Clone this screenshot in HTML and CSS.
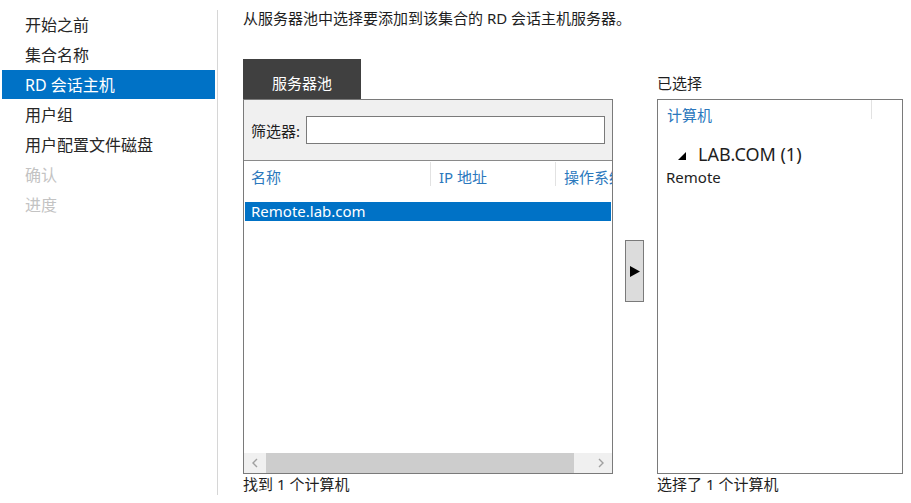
FILE: index.html
```html
<!DOCTYPE html>
<html lang="zh-CN">
<head>
  <meta charset="UTF-8">
  <title>选择服务器</title>
  <link rel="stylesheet" href="styles.css">
</head>
<body>
  <div class="wizard">
    <!-- 左侧步骤 -->
    <ul class="steps">
      <li>开始之前</li>
      <li>集合名称</li>
      <li class="active">RD 会话主机</li>
      <li>用户组</li>
      <li>用户配置文件磁盘</li>
      <li class="disabled">确认</li>
      <li class="disabled">进度</li>
    </ul>

    <!-- 主内容 -->
    <div class="content">
      <p class="intro">从服务器池中选择要添加到该集合的 RD 会话主机服务器。</p>

      <div class="picker">
        <!-- 服务器池 -->
        <div class="pool">
          <div class="tab">服务器池</div>
          <div class="box">
            <div class="filter">
              <label>筛选器:</label>
              <input type="text" class="filter-input">
            </div>
            <div class="list-head">
              <span class="col col-name">名称</span>
              <span class="col col-ip">IP 地址</span>
              <span class="col col-os">操作系统</span>
            </div>
            <div class="list-body">
              <div class="row selected">Remote.lab.com</div>
            </div>
            <div class="hscroll">
              <svg class="arrow" width="8" height="10" viewBox="0 0 8 10"><path d="M6 1 L2 5 L6 9" fill="none" stroke="#a0a0a0" stroke-width="1.4"/></svg>
              <div class="thumb"></div>
              <svg class="arrow" width="8" height="10" viewBox="0 0 8 10"><path d="M2 1 L6 5 L2 9" fill="none" stroke="#a0a0a0" stroke-width="1.4"/></svg>
            </div>
          </div>
          <div class="count">找到 1 个计算机</div>
        </div>

        <!-- 添加按钮 -->
        <div class="mover">
          <div class="add-btn">
            <svg width="10" height="11" viewBox="0 0 10 11"><path d="M0 0 L10 5.5 L0 11 Z" fill="#000"/></svg>
          </div>
        </div>

        <!-- 已选择 -->
        <div class="chosen">
          <div class="chosen-label">已选择</div>
          <div class="box">
            <div class="chosen-head">
              <span class="col-comp">计算机</span>
            </div>
            <div class="tree">
              <div class="group">
                <svg width="8" height="8" viewBox="0 0 8 8"><path d="M8 0 L8 8 L0 8 Z" fill="#000"/></svg>
                <span>LAB.COM (1)</span>
              </div>
              <div class="leaf">Remote</div>
            </div>
          </div>
          <div class="count">选择了 1 个计算机</div>
        </div>
      </div>
    </div>
  </div>
</body>
</html>
```

FILE: styles.css
```css
/* ====== RESET ====== */
* {
  margin: 0;
  padding: 0;
  box-sizing: border-box;
}
ul {
  list-style: none;
}

body {
  font-family: "Noto Sans", "Noto Sans CJK SC", sans-serif;
  font-size: 15px;
  color: #1e1e1e;
  background-color: #fff;
}

.wizard {
  display: flex;
  height: 503px;
}

/* ====== STEPS ====== */
.steps {
  width: 218px;
  margin-top: 10px;
  padding: 0 2px 0 2px;
  border-right: 1px solid #d6d6d6;
  height: 485px;
}
.steps li {
  height: 30px;
  line-height: 30px;
  padding-left: 23px;
  font-size: 16px;
  color: #262626;
}
.steps li.active {
  background-color: #0072c6;
  color: #fff;
  height: 29px;
  margin-bottom: 1px;
}
.steps li.disabled {
  color: #c3c3c3;
}

/* ====== CONTENT ====== */
.content {
  padding-left: 25px;
  padding-top: 8px;
}
.intro {
  line-height: 20px;
  height: 20px;
}

.picker {
  display: flex;
  margin-top: 31px;
}

.box {
  border: 1px solid #7a7a7a;
  height: 375px;
  background-color: #fff;
}

/* ====== POOL ====== */
.pool {
  width: 370px;
}
.tab {
  width: 118px;
  height: 40px;
  background-color: #404040;
  color: #fff;
  text-align: center;
  line-height: 22px;
  padding-top: 13px;
}
.pool .box {
  display: flex;
  flex-direction: column;
}
.filter {
  background-color: #f0f0f0;
  height: 61px;
  border-bottom: 1px solid #8a8a8a;
  display: flex;
  align-items: center;
  padding-left: 7px;
  padding-right: 7px;
}
.filter label {
  width: 55px;
}
.filter-input {
  width: 299px;
  height: 28px;
  border: 1px solid #7a7a7a;
  background-color: #fff;
}
.list-head {
  display: flex;
  height: 24px;
  margin-top: 1px;
}
.col {
  color: #2b78bd;
  line-height: 30px;
  white-space: nowrap;
  overflow: hidden;
}
.col-name {
  width: 187px;
  padding-left: 7px;
  border-right: 1px solid #e2e2e2;
}
.col-ip {
  width: 125px;
  padding-left: 8px;
  border-right: 1px solid #e2e2e2;
}
.col-os {
  flex: 1;
  padding-left: 8px;
}
.list-body {
  flex: 1;
  padding: 16px 1px 0 1px;
}
.row {
  height: 19px;
  line-height: 19px;
  padding-left: 6px;
}
.row.selected {
  background-color: #0072c6;
  color: #fff;
}
.hscroll {
  height: 20px;
  background-color: #f0f0f0;
  display: flex;
  align-items: center;
}
.hscroll .arrow {
  margin: 0 7px;
}
.thumb {
  height: 20px;
  background-color: #cdcdcd;
  flex: 1;
  margin: 0 16px 0 0;
}
.count {
  line-height: 21px;
}

/* ====== MOVE BUTTON ====== */
.mover {
  width: 44px;
  padding-left: 12px;
  padding-top: 181px;
}
.add-btn {
  width: 19px;
  height: 62px;
  background-color: #dcdcdc;
  border: 1px solid #7a7a7a;
  display: flex;
  align-items: center;
  justify-content: center;
}

/* ====== CHOSEN ====== */
.chosen {
  width: 246px;
}
.chosen-label {
  height: 40px;
  line-height: 20px;
  padding-top: 14px;
}
.chosen-head {
  height: 19px;
  display: flex;
}
.col-comp {
  display: block;
  width: 214px;
  height: 19px;
  padding-left: 9px;
  padding-top: 5px;
  line-height: 20px;
  color: #2b78bd;
  border-right: 1px solid #e2e2e2;
  white-space: nowrap;
}
.tree {
  padding-top: 23px;
}
.group {
  display: flex;
  align-items: center;
  padding-left: 20px;
  height: 24px;
}
.group svg {
  margin-right: 12px;
  margin-top: 3px;
}
.group span {
  font-size: 18px;
}
.leaf {
  padding-left: 8px;
  line-height: 22px;
}
```
